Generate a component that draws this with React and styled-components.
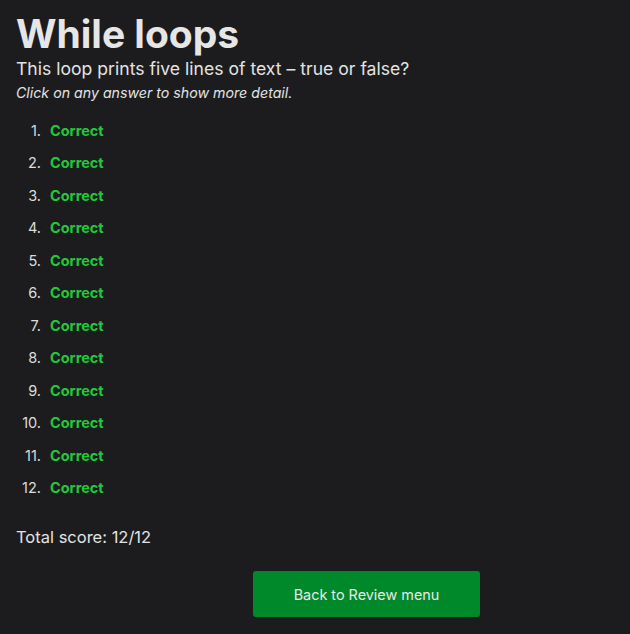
import React from 'react'
import styled, { createGlobalStyle } from 'styled-components'

const GlobalStyle = createGlobalStyle`
  html, body {
    margin: 0;
    background: #1c1c1e;
    color: #e3e3e3;
    font-family: Inter, "Noto Sans", sans-serif;
  }
`

const Page = styled.div`
  padding: 10px 16px 0;
  min-height: 100vh;
  box-sizing: border-box;
`

const Title = styled.h1`
  margin: 0;
  font-size: 39px;
  line-height: 48px;
  font-weight: 700;
  color: #e6e6e6;
`

const Question = styled.p`
  margin: 0;
  font-size: 17.6px;
  line-height: 22px;
`

const Hint = styled.p`
  margin: 3px 0 0;
  font-size: 14.2px;
  line-height: 20px;
  font-style: italic;
`

const List = styled.ol`
  list-style: none;
  margin: 11px 0 0;
  padding: 0;
`

const Row = styled.li`
  display: flex;
  align-items: center;
  height: 32.5px;
  gap: 9px;
  font-size: 14.5px;
`

const Num = styled.span`
  width: 25px;
  text-align: right;
  color: #dcdcdc;
`

const Result = styled.span`
  font-weight: 700;
  color: ${(p) => (p.ok ? '#20c93a' : '#ff453a')};
  cursor: pointer;
`

const Total = styled.p`
  margin: 21px 0 0;
  font-size: 16.5px;
  line-height: 24px;
`

const Actions = styled.div`
  display: flex;
  padding-left: 237px;
  margin-top: 22px;
`

const Button = styled.button`
  width: 227px;
  height: 46px;
  border: none;
  border-radius: 3px;
  background: #00892b;
  color: #e8e8e8;
  font-family: inherit;
  font-size: 14.4px;
  cursor: pointer;
`

const answers = Array.from({ length: 12 }, () => true)

export default function App() {
  const score = answers.filter(Boolean).length
  return (
    <Page>
      <GlobalStyle />
      <Title>While loops</Title>
      <Question>This loop prints five lines of text – true or false?</Question>
      <Hint>Click on any answer to show more detail.</Hint>
      <List>
        {answers.map((ok, i) => (
          <Row key={i}>
            <Num>{i + 1}.</Num>
            <Result ok={ok}>{ok ? 'Correct' : 'Incorrect'}</Result>
          </Row>
        ))}
      </List>
      <Total>
        Total score: {score}/{answers.length}
      </Total>
      <Actions>
        <Button>Back to Review menu</Button>
      </Actions>
    </Page>
  )
}
